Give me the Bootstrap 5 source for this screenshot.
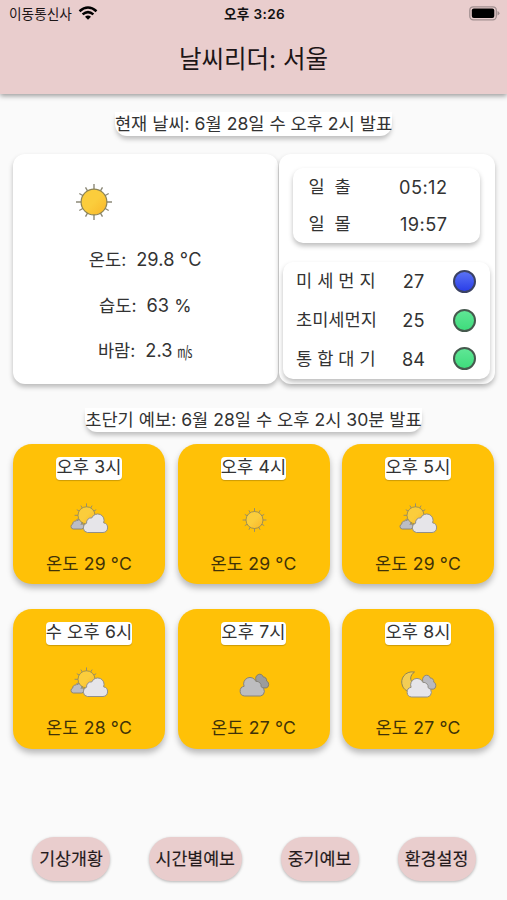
<!DOCTYPE html>
<html lang="ko">
<head>
<meta charset="utf-8">
<meta name="viewport" content="width=device-width, initial-scale=1">
<title>날씨리더: 서울</title>
<link href="https://cdn.jsdelivr.net/npm/bootstrap@5.3.0/dist/css/bootstrap.min.css" rel="stylesheet">
<style>
body{font-family:Inter,"Noto Sans CJK KR",sans-serif;font-size:17.6px;line-height:24px;color:#333;background:#fafafa;height:900px;overflow:hidden;font-weight:400}
.topbar{background:#e9cdcd;height:93.5px;color:#1c1516;box-shadow:0 2px 5px rgba(0,0,0,.38)}
.status{height:27px;font-size:13.7px;padding:0 7px 0 9px;display:grid;grid-template-columns:1fr auto 1fr}
.wifi{margin-left:2px}
.clock{font-weight:600;font-size:13.6px;letter-spacing:.35px;color:#111}
.apptitle{font-size:24.5px;line-height:64px;font-weight:400}
.caption-pill{background:#fff;height:24px;line-height:23px;border-radius:0 0 12px 12px;box-shadow:0 4px 5px -1px rgba(0,0,0,.25);white-space:nowrap}
.caption-top{padding-top:18px}
.caption-mid{padding-top:24px}
.panel{background:#fff;border-radius:12px;box-shadow:0 3px 5px rgba(0,0,0,.26)}
.panels{height:230px;margin:18.5px 12.5px 0 13px;gap:1px}
.now{width:264.5px}
.now-icon{margin:28px 0 0 61px}
.reading{margin-top:21.5px;height:24px}
.now-icon + .reading{margin-top:25px}
.unit{font-size:15px}
.figure-num{font-size:18.2px;letter-spacing:.12px}
.side{width:216px;padding:14px 4.5px 4.5px 5px}
.suntimes{width:187.5px;height:75px;border-radius:10px;margin-left:9px;padding:0 32.5px 0 16px}
.air{height:117px;border-radius:10px;margin:19px 0 0 -1px;padding:0 14px 0 13.5px}
.line{height:37.5px}
.air .line{height:38.8px}
.suntimes .figure-num{letter-spacing:.45px}
.aname{width:84px;white-space:nowrap}
.aval{width:67px;text-align:center}
.dot{width:23px;height:23px;border-radius:50%;border:2px solid #46594e}
.dot-blue{background:linear-gradient(#5a72f5,#2a3ee8);border-color:#3b4263}
.dot-green{background:linear-gradient(#5fe695,#3fdc7c)}
.forecast{display:grid;grid-template-columns:repeat(3,152px);gap:24.5px 12.5px;margin:12px 0 0 13px}
.fcard{background:#ffc107;height:140px;border-radius:19px;color:#403208;box-shadow:0 4px 6px rgba(0,0,0,.27);letter-spacing:.17px}
.chip{background:#fff;color:#333;height:23px;line-height:20px;border-radius:4px;margin-top:13px;box-shadow:0 1px 1px rgba(0,0,0,.2);white-space:nowrap}
.wx{margin:18.5px 0 13px}
.tabs-row{margin:88px 0 0 32px;gap:39px}
.tab-btn{background:#e9cdcd;color:#241a1b;height:44.5px;border-radius:22px;font-size:17.3px;font-weight:400;-webkit-text-stroke:.15px #241a1b;padding:0;line-height:40px;border:0;box-shadow:0 1px 3px rgba(0,0,0,.28);width:78px;white-space:nowrap}
.tab-btn.wide{width:92.5px}
</style>
<script src="https://cdn.jsdelivr.net/npm/bootstrap@5.3.0/dist/js/bootstrap.bundle.min.js"></script>
</head>
<body>
<svg width="0" height="0" class="position-absolute" aria-hidden="true">
<defs>
<linearGradient id="gold" x1="0" y1="0" x2="1" y2="1"><stop offset=".5" stop-color="#fbcd3c"/><stop offset="1" stop-color="#f9b528"/></linearGradient>
<g id="sun"><path d="M0-18V18M-18 0H18M-8.500-14.700 8.500 14.700M8.500-14.700-8.500 14.700M-14.700-8.500 14.700 8.500M-14.700 8.500 14.700-8.500" stroke="#8d8a79" stroke-width="1.400"/><circle r="12.900" fill="url(#gold)" stroke="#8d8455" stroke-width="1.200"/></g>
<path id="cloud" d="M5.300 19.500A4.800 4.800 0 0 1 4.600 10.200A4.600 4.600 0 0 1 9.800 4.900A6.300 6.300 0 0 1 21.600 9.800A4.900 4.900 0 0 1 21 19.500Z"/>
<g id="partly"><use href="#cloud" transform="translate(1.300 19.500) scale(.54)" fill="#bcbdc4" stroke="#85827a" stroke-width="1.700"/><use href="#sun" transform="translate(17.500 16.300) scale(.66)"/><use href="#cloud" transform="translate(13 14)" fill="#e6e5e9" stroke="#928f89" stroke-width="1"/></g>
</defs>
</svg>
<header class="topbar">
<div class="status align-items-center">
<div class="d-flex align-items-center gap-1"><span>이동통신사</span>
<svg class="wifi" width="20" height="15" viewBox="0 0 20 15" fill="none" stroke="#000" stroke-width="2.500"><path d="M1.500 5.200Q10-2.200 18.500 5.200M4.600 8.400Q10 3.800 15.400 8.400"/><path d="M7 10.800Q10 8.300 13 10.800L10 13.800Z" fill="#000" stroke="none"/></svg></div>
<div class="clock">오후 3:26</div>
<svg class="ms-auto" width="31" height="15" viewBox="0 0 31 15"><rect x=".8" y=".8" width="26.500" height="13" rx="3.500" fill="none" stroke="#a18f90" stroke-width="1.300"/><rect x="2.800" y="2.600" width="22.500" height="9.400" rx="2" fill="#000"/><path d="M28.500 5v4.600q2-1 2-2.300T28.500 5" fill="#a18f90"/></svg>
</div>
<h1 class="apptitle text-center m-0">날씨리더: 서울</h1>
</header>
<main>
<div class="caption-top d-flex justify-content-center"><div class="caption-pill">현재 날씨: 6월 28일 수 오후 2시 발표</div></div>
<div class="panels d-flex">
<section class="panel now d-flex flex-column align-items-center">
<svg class="now-icon align-self-start" width="40" height="40" viewBox="-20 -20 40 40"><use href="#sun"/></svg>
<div class="reading">온도:&nbsp; <span class="figure-num">29.8 °C</span></div>
<div class="reading">습도:&nbsp; <span class="figure-num">63</span> %</div>
<div class="reading">바람:&nbsp; <span class="figure-num">2.3</span> <span class="unit">㎧</span></div>
</section>
<section class="panel side">
<div class="panel suntimes">
<div class="line d-flex align-items-center justify-content-between"><span>일&nbsp; 출</span><span class="figure-num">05:12</span></div>
<div class="line d-flex align-items-center justify-content-between"><span>일&nbsp; 몰</span><span class="figure-num">19:57</span></div>
</div>
<div class="panel air">
<div class="line d-flex align-items-center"><span class="aname">미 세 먼 지</span><span class="aval figure-num">27</span><i class="dot dot-blue ms-auto"></i></div>
<div class="line d-flex align-items-center"><span class="aname">초미세먼지</span><span class="aval figure-num">25</span><i class="dot dot-green ms-auto"></i></div>
<div class="line d-flex align-items-center"><span class="aname">통 합 대 기</span><span class="aval figure-num">84</span><i class="dot dot-green ms-auto"></i></div>
</div>
</section>
</div>
<div class="caption-mid d-flex justify-content-center"><div class="caption-pill">초단기 예보: 6월 28일 수 오후 2시 30분 발표</div></div>
<div class="forecast">
<article class="fcard d-flex flex-column align-items-center"><div class="chip">오후 3시</div><svg class="wx" width="40" height="40"><use href="#partly"/></svg><div>온도 29 °C</div></article>
<article class="fcard d-flex flex-column align-items-center"><div class="chip">오후 4시</div><svg class="wx" width="40" height="40"><use href="#sun" transform="translate(20.500 21) scale(.66)"/></svg><div>온도 29 °C</div></article>
<article class="fcard d-flex flex-column align-items-center"><div class="chip">오후 5시</div><svg class="wx" width="40" height="40"><use href="#partly"/></svg><div>온도 29 °C</div></article>
<article class="fcard d-flex flex-column align-items-center"><div class="chip">수 오후 6시</div><svg class="wx" width="40" height="40"><use href="#partly"/></svg><div>온도 28 °C</div></article>
<article class="fcard d-flex flex-column align-items-center"><div class="chip">오후 7시</div><svg class="wx" width="40" height="40"><use href="#cloud" transform="translate(35.500 10.500) scale(-.62 .74)" fill="#9c9c9c" stroke="#7b7869" stroke-width="1.300"/><use href="#cloud" transform="translate(31.700 13.500) scale(-1 1)" fill="#bdbdbf" stroke="#86837a"/></svg><div>온도 27 °C</div></article>
<article class="fcard d-flex flex-column align-items-center"><div class="chip">오후 8시</div><svg class="wx" width="40" height="40"><path d="M16.500 9C7 7.500 1.500 16 4.500 23C6 26.500 9 28.500 12 28L16 20C11 18 12 12 16.500 9Z" fill="#f3cd55" stroke="#8d8455"/><use href="#cloud" transform="translate(38.700 11.500) scale(-.64 .75)" fill="#b9b9be" stroke="#85827a" stroke-width="1.300"/><use href="#cloud" transform="translate(34.700 14.500) scale(-1 1)" fill="#e6e5e9" stroke="#928f89"/></svg><div>온도 27 °C</div></article>
</div>
<nav class="tabs-row d-flex">
<button class="btn tab-btn">기상개황</button><button class="btn tab-btn wide">시간별예보</button><button class="btn tab-btn">중기예보</button><button class="btn tab-btn">환경설정</button>
</nav>
</main>
</body>
</html>
